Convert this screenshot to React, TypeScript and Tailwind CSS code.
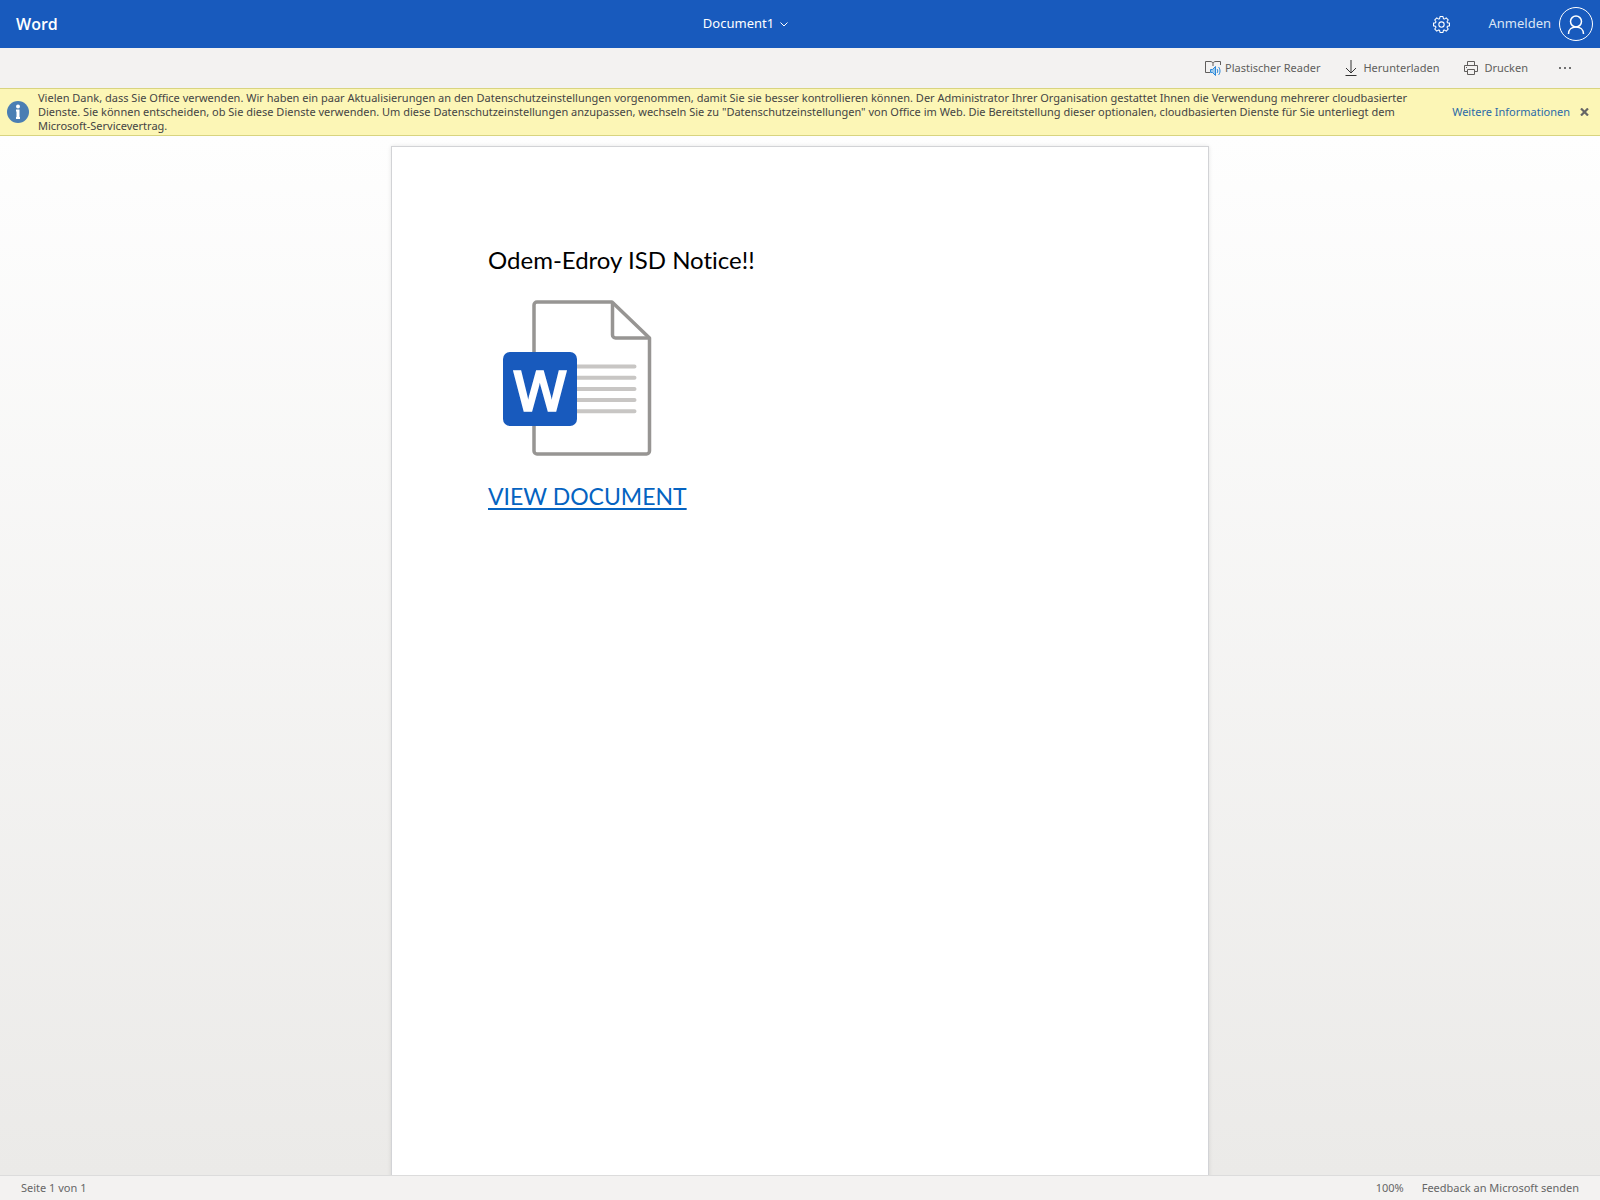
import type { SVGProps } from "react";

const BANNER_LINES = [
  "Vielen Dank, dass Sie Office verwenden. Wir haben ein paar Aktualisierungen an den Datenschutzeinstellungen vorgenommen, damit Sie sie besser kontrollieren können. Der Administrator Ihrer Organisation gestattet Ihnen die Verwendung mehrerer cloudbasierter",
  "Dienste. Sie können entscheiden, ob Sie diese Dienste verwenden. Um diese Datenschutzeinstellungen anzupassen, wechseln Sie zu \"Datenschutzeinstellungen\" von Office im Web. Die Bereitstellung dieser optionalen, cloudbasierten Dienste für Sie unterliegt dem",
  "Microsoft-Servicevertrag.",
];

function Icon(props: SVGProps<SVGSVGElement>) {
  return <svg fill="none" stroke="currentColor" aria-hidden="true" {...props} />;
}

function GearIcon() {
  return (
    <Icon viewBox="0 0 16 16" className="size-[17px]" strokeLinejoin="round">
      <path d="M6.6.5h2.8l.4 2 .9.4 1.7-1.1 1.9 1.9-1.1 1.7.4.9 1.9.4v2.6l-1.9.4-.4.9 1.1 1.7-1.9 1.9-1.7-1.1-.9.4-.4 2H6.6l-.4-2-.9-.4-1.7 1.1-1.9-1.9 1.1-1.7-.4-.9-1.9-.4V6.7l1.9-.4.4-.9-1.1-1.7 1.9-1.9 1.7 1.1.9-.4z" />
      <circle cx="8" cy="8" r="2.5" />
    </Icon>
  );
}

function ReaderIcon() {
  return (
    <Icon viewBox="0 0 16 16" className="size-4">
      <path d="M5 12.5H.5v-11h4.5c1.500 0 2.500.5 3 1.500.5-1 1.500-1.500 3-1.500h4.500V5M8 3v3" />
      <path d="M5.500 9.500h2l3-3v9l-3-3h-2z" fill="#9cc9ec" stroke="#2b88d8" />
      <path d="M12 9c1 1 1 3 0 4M13.500 7c2 2 2 6 0 8" stroke="#2b88d8" />
    </Icon>
  );
}

function DownloadIcon() {
  return (
    <Icon viewBox="0 0 12 16" className="h-4 w-3 text-[#333]">
      <path d="M6 0v13M1 8l5 5 5-5M.5 15.5h11" />
    </Icon>
  );
}

function PrinterIcon() {
  return (
    <Icon viewBox="0 0 14 14" className="size-3.5">
      <path d="M3.5 4.5v-4h7v4M3.5 10.5h-3v-6h13v6h-3M3.5 8.5h7v5h-7zM2 6.5h1" />
    </Icon>
  );
}

function WordFileIcon() {
  return (
    <svg viewBox="0 0 150 158" className="ml-[14px] h-[158px] w-[150px]" role="img" aria-label="Word">
      <g fill="none" stroke="#979593" strokeWidth="3.5" strokeLinejoin="round">
        <path d="M35 2h75l37.500 36v113a3 3 0 0 1-3 3H35a3 3 0 0 1-3-3V5a3 3 0 0 1 3-3z" />
        <path d="M110.500 2v33a3 3 0 0 0 3 3h34" />
      </g>
      <path
        d="M60 66.500h72.500M60 77.700h72.500M60 88.900h72.500M60 100h72.500M60 111.200h72.500"
        stroke="#c8c6c4"
        strokeWidth="4"
        strokeLinecap="round"
      />
      <rect x="1" y="52" width="74" height="74" rx="7" fill="#185abd" />
      <text
        x="38"
        y="111"
        textAnchor="middle"
        fill="#fff"
        stroke="#fff"
        strokeWidth="1.5"
        fontSize="56"
        fontWeight="600"
        className="font-['Open_Sans',sans-serif]"
      >
        W
      </text>
    </svg>
  );
}

function Header() {
  return (
    <header className="flex h-12 shrink-0 items-center bg-[#185abd] pr-[7px] pl-4 text-[13px] text-white">
      <span className="flex-1 font-['Open_Sans',sans-serif] text-base font-semibold">Word</span>
      <button type="button" className="mr-[118px] flex items-center gap-1.5">
        Document1
        <Icon viewBox="0 0 8 5" className="h-[5px] w-2">
          <path d="m.5.5 3.5 3.5L7.5.5" />
        </Icon>
      </button>
      <div className="flex flex-1 items-center justify-end">
        <button type="button" aria-label="Einstellungen" className="mr-[38px]">
          <GearIcon />
        </button>
        <button type="button" className="flex items-center gap-2 text-[#dce6f5]">
          Anmelden
          <Icon viewBox="0 0 34 34" className="size-[34px] text-white">
            <circle cx="17" cy="17" r="16.5" />
            <circle cx="17" cy="14.5" r="5.5" strokeWidth="1.5" />
            <path d="M9.5 27c0-4.500 3.300-7 7.500-7s7.500 2.500 7.500 7" strokeWidth="1.5" />
          </Icon>
        </button>
      </div>
    </header>
  );
}

function Toolbar() {
  return (
    <div className="flex h-10 shrink-0 items-center justify-end bg-[#f3f2f1] pr-7 text-[11px] text-[#605e5c]">
      <button type="button" className="mr-[25px] flex items-center gap-1">
        <ReaderIcon />
        Plastischer Reader
      </button>
      <button type="button" className="mr-[25px] flex items-center gap-1.5">
        <DownloadIcon />
        Herunterladen
      </button>
      <button type="button" className="mr-[30px] flex items-center gap-1.5">
        <PrinterIcon />
        Drucken
      </button>
      <button type="button" aria-label="Weitere Optionen">
        <svg viewBox="0 0 14 4" className="h-1 w-3.5" fill="#444" aria-hidden="true">
          <circle cx="2" cy="2" r="1" />
          <circle cx="7" cy="2" r="1" />
          <circle cx="12" cy="2" r="1" />
        </svg>
      </button>
    </div>
  );
}

function PrivacyBanner() {
  return (
    <div
      role="status"
      className="flex shrink-0 items-center border-y border-[#d8d480] bg-[#fcf6b6] py-0.5 pr-[11px] pl-[7px] text-[11px] text-[#444]"
    >
      <svg viewBox="0 0 22 22" className="mr-[9px] size-[22px] shrink-0" aria-hidden="true">
        <circle cx="11" cy="11" r="11" fill="#4a7eb3" />
        <circle cx="11" cy="5.5" r="2" fill="#fff" />
        <path d="M9 8.5h3.5V16H13v2H9v-2h.5v-5.5H9z" fill="#fff" />
      </svg>
      <p className="flex-1 leading-[14px] whitespace-nowrap">
        {BANNER_LINES.map((line) => (
          <span key={line} className="block">
            {line}
          </span>
        ))}
      </p>
      <a href="#datenschutz" className="whitespace-nowrap text-[#2b6aa8]">
        Weitere Informationen
      </a>
      <button type="button" aria-label="Schließen" className="ml-2.5">
        <Icon viewBox="0 0 9 8" className="h-2 w-[9px] text-[#666]" strokeWidth="2.2">
          <path d="m1 .5 7 7M8 .5l-7 7" />
        </Icon>
      </button>
    </div>
  );
}

export default function App() {
  return (
    <div className="flex h-screen flex-col overflow-hidden font-['Noto_Sans','Open_Sans',sans-serif]">
      <Header />
      <Toolbar />
      <PrivacyBanner />
      <main className="flex min-h-0 flex-1 justify-center overflow-hidden bg-linear-to-b from-[#fefefe] to-[#ebeae8] pt-[10px]">
        <article className="h-[1058px] w-[818px] border border-[#d2d3d6] bg-white px-24 pt-[95px] font-['Lato',sans-serif] shadow-[0_0_4px_rgba(0,0,0,0.1)]">
          <h1 className="mb-[22px] text-2xl leading-9 text-black [font-variant-ligatures:none]">
            Odem-Edroy ISD Notice!!
          </h1>
          <WordFileIcon />
          <a
            href="#dokument"
            className="mt-5 inline-block text-[23px] leading-9 text-[#0563c1] underline decoration-2 underline-offset-3"
          >
            VIEW DOCUMENT
          </a>
        </article>
      </main>
      <footer className="flex h-[25px] shrink-0 items-center border-t border-[#dcdcdc] bg-[#f3f2f1] px-[21px] text-[11px] text-[#666]">
        <span className="flex-1">Seite 1 von 1</span>
        <button type="button" className="mr-[18px]">100%</button>
        <button type="button">Feedback an Microsoft senden</button>
      </footer>
    </div>
  );
}
